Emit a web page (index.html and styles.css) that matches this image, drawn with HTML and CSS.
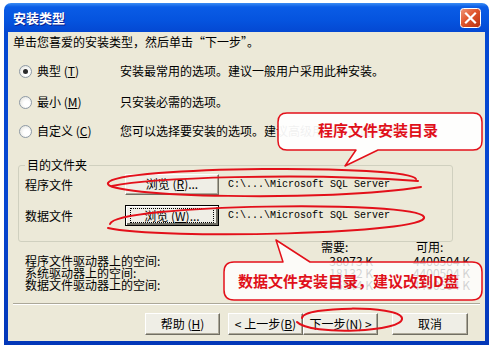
FILE: index.html
```html
<!DOCTYPE html>
<html lang="zh-CN">
<head>
<meta charset="utf-8">
<title>安装类型</title>
<link rel="stylesheet" href="styles.css">
</head>
<body>
<div class="page">
	<div class="window">
		<div class="titlebar">
			<span class="title">安装类型</span>
			<span class="close">
				<svg width="21" height="20" viewBox="0 0 21 20">
					<defs>
						<linearGradient id="cg" x1="0" y1="0" x2="1" y2="1">
							<stop offset="0" stop-color="#F09A7C"/>
							<stop offset="0.45" stop-color="#E0552C"/>
							<stop offset="1" stop-color="#B8300F"/>
						</linearGradient>
					</defs>
					<rect x="0.5" y="0.5" width="20" height="19" rx="3" fill="url(#cg)" stroke="#fff"/>
					<path d="M6 5.5 L15 14.5 M15 5.5 L6 14.5" stroke="#fff" stroke-width="2.2" stroke-linecap="square"/>
				</svg>
			</span>
		</div>
		<div class="client">
			<div class="intro">单击您喜爱的安装类型，然后单击“下一步”。</div>

			<div class="option opt-1">
				<span class="radio checked"></span>
				<span class="opt-label">典型 (<u>T</u>)</span>
				<span class="opt-desc">安装最常用的选项。建议一般用户采用此种安装。</span>
			</div>
			<div class="option opt-2">
				<span class="radio"></span>
				<span class="opt-label">最小 (<u>M</u>)</span>
				<span class="opt-desc">只安装必需的选项。</span>
			</div>
			<div class="option opt-3">
				<span class="radio"></span>
				<span class="opt-label">自定义 (<u>C</u>)</span>
				<span class="opt-desc">您可以选择要安装的选项。建议高级用户采用此种安装。</span>
			</div>

			<fieldset class="group">
				<legend>目的文件夹</legend>
				<div class="dest-row">
					<span class="dest-label">程序文件</span>
					<button class="btn browse">浏览 (<u>R</u>)...</button>
					<span class="path">C:\...\Microsoft SQL Server</span>
				</div>
				<div class="dest-row dest-2">
					<span class="dest-label">数据文件</span>
					<button class="btn browse focused"><span class="focus-ring">浏览 (<u>W</u>)...</span></button>
					<span class="path">C:\...\Microsoft SQL Server</span>
				</div>
			</fieldset>

			<div class="space">
				<span class="head"></span>
				<span class="head">需要:</span>
				<span class="head head-free">可用:</span>
				<span>程序文件驱动器上的空间:</span>
				<span class="num">38073 K</span>
				<span class="num">4400504 K</span>
				<span>系统驱动器上的空间:</span>
				<span class="num">18132 K</span>
				<span class="num">4400504 K</span>
				<span>数据文件驱动器上的空间:</span>
				<span class="num">36544 K</span>
				<span class="num">4400504 K</span>
			</div>

			<div class="sep"></div>

			<div class="buttons">
				<button class="btn">帮助 (<u>H</u>)</button>
				<button class="btn btn-back">&lt; 上一步(<u>B</u>)</button>
				<button class="btn">下一步(<u>N</u>) &gt;</button>
				<button class="btn btn-cancel">取消</button>
			</div>
		</div>
	</div>

	<!-- red hand-drawn notes over the dialog -->
	<svg class="marks" width="491" height="350" viewBox="0 0 491 350">
		<path class="ring" d="M416,179 C410,164 116,166 108,183 C102,197 330,202 421,187"/>
		<path class="ring" d="M112,186 C150,178 300,172 418,181"/>
		<path class="ring" d="M110,224 C116,204 416,200 424,217 C430,234 160,240 108,228"/>
		<path class="ring" d="M302,318 C304,306 398,305 402,318 C405,332 310,336 297,322"/>

		<path class="bubble" d="M287,113 H473 Q482,113 482,122 V141 Q482,150 473,150 H378 L345,166 L356,150 H287 Q278,150 278,141 V122 Q278,113 287,113 Z"/>
		<text class="note" x="318" y="136">程序文件安装目录</text>

		<path class="bubble bubble-2" d="M234,262 H283 L276,240 L310,262 H472 Q482,262 482,272 V290 Q482,300 472,300 H234 Q224,300 224,290 V272 Q224,262 234,262 Z"/>
		<text class="note" x="238" y="287">数据文件安装目录，建议改到D盘</text>
	</svg>
</div>
</body>
</html>
```

FILE: styles.css
```css
body {
	margin: 0;
	background: #fff;
	font-family: "Noto Sans CJK SC", "Liberation Sans", sans-serif;
	font-size: 12px;
	color: #000;
}

.page {
	position: relative;
	width: 491px;
	height: 350px;
	padding: 3px 0 0 4px;
	box-sizing: border-box;
	overflow: hidden;
}

.window {
	width: 485px;
	height: 342px;
	box-sizing: border-box;
	padding: 0 4px 4px;
	border-radius: 7px 7px 0 0;
	background: linear-gradient(#3A8CF4 0, #0A5CE6 4px, #0553DE 18px, #0448D2 29px, #0746D0 60%, #0337B8 100%);
	display: flex;
	flex-direction: column;
}

.titlebar {
	height: 29px;
	flex: none;
	display: flex;
	align-items: center;
	justify-content: space-between;
	padding: 0 4px 0 5px;
}

.title {
	color: #fff;
	font-size: 13px;
	font-weight: 700;
	text-shadow: 1px 1px 0 #0A1E8C;
}

.close {
	display: flex;
	margin-top: 1px;
}

.client {
	flex: 1;
	background: #ECE9D8;
}

.intro {
	height: 20px;
	line-height: 20px;
	padding-left: 5px;
}

.option {
	height: 20px;
	line-height: 20px;
	display: flex;
	align-items: center;
	padding-left: 11px;
}

.opt-1 { margin-top: 9px; }
.opt-2 { margin-top: 11px; }
.opt-3 { margin-top: 9px; }

.radio {
	width: 11px;
	height: 11px;
	border: 1px solid #8E9AA6;
	border-radius: 50%;
	background: radial-gradient(circle at 60% 60%, #fff 30%, #DCDCD4 100%);
	position: relative;
	flex: none;
}

.radio.checked::after {
	content: "";
	position: absolute;
	left: 3px;
	top: 3px;
	width: 5px;
	height: 5px;
	border-radius: 50%;
	background: #2B2B2B;
}

.opt-label {
	width: 83px;
	margin-left: 5px;
}

.opt-desc {
	white-space: nowrap;
}

.group {
	margin: 17px 0 0 10px;
	width: 435px;
	box-sizing: border-box;
	padding: 0 0 15px 6px;
	border: 1px solid #D0D0BF;
	border-radius: 3px;
	min-width: 0;
}

.group legend {
	padding: 0 2px;
	line-height: 14px;
}

.dest-row {
	height: 22px;
	margin-top: 1px;
	display: flex;
	align-items: center;
}

.dest-2 {
	margin-top: 9px;
}

.dest-label {
	width: 100px;
}

.path {
	margin-left: 9px;
	font-family: "Liberation Mono", "DejaVu Sans Mono", monospace;
	font-size: 10px;
	white-space: nowrap;
}

.btn {
	font-family: inherit;
	font-size: 12px;
	color: #000;
	width: 75px;
	height: 22px;
	padding: 0;
	background: #EFEEE6;
	border: 1px solid;
	border-color: #fff #716F64 #716F64 #fff;
	box-shadow: inset -1px -1px 0 #ACA899;
	line-height: 18px;
}

.browse {
	width: 94px;
	height: 21px;
}

.focused {
	border-color: #000;
	box-shadow: inset 1px 1px 0 #fff, inset -2px -2px 0 #716F64;
	padding: 2px 4px;
}

.focus-ring {
	display: block;
	height: 13px;
	line-height: 13px;
	border: 1px dotted #000;
}

.space {
	display: grid;
	grid-template-columns: 296px 52px 97px;
	grid-template-rows: 14px 12px 12px 12px;
	padding-left: 17px;
	line-height: 12px;
	margin-top: -1px;
}

.head-free {
	padding-left: 43px;
}

.num {
	justify-self: end;
}

.sep {
	margin: 12px 5px 0;
	border-top: 1px solid #ACA899;
	border-bottom: 1px solid #fff;
}

.buttons {
	display: flex;
	margin-top: 8px;
	padding-left: 137px;
}

.btn-back {
	margin-left: 8px;
}

.btn-cancel {
	margin-left: 14px;
	width: 76px;
}

.marks {
	position: absolute;
	left: 0;
	top: 0;
	pointer-events: none;
}

.ring {
	fill: none;
	stroke: #E3101A;
	stroke-width: 2;
	stroke-linecap: round;
}

.bubble {
	fill: #fff;
	fill-opacity: 0.94;
	stroke: #E3101A;
	stroke-width: 1.5;
	stroke-linejoin: round;
}

.bubble-2 {
	fill-opacity: 0.82;
}

.note {
	fill: #E0101A;
	font-family: "Noto Sans CJK SC", sans-serif;
	font-size: 15px;
	font-weight: 700;
}
```
